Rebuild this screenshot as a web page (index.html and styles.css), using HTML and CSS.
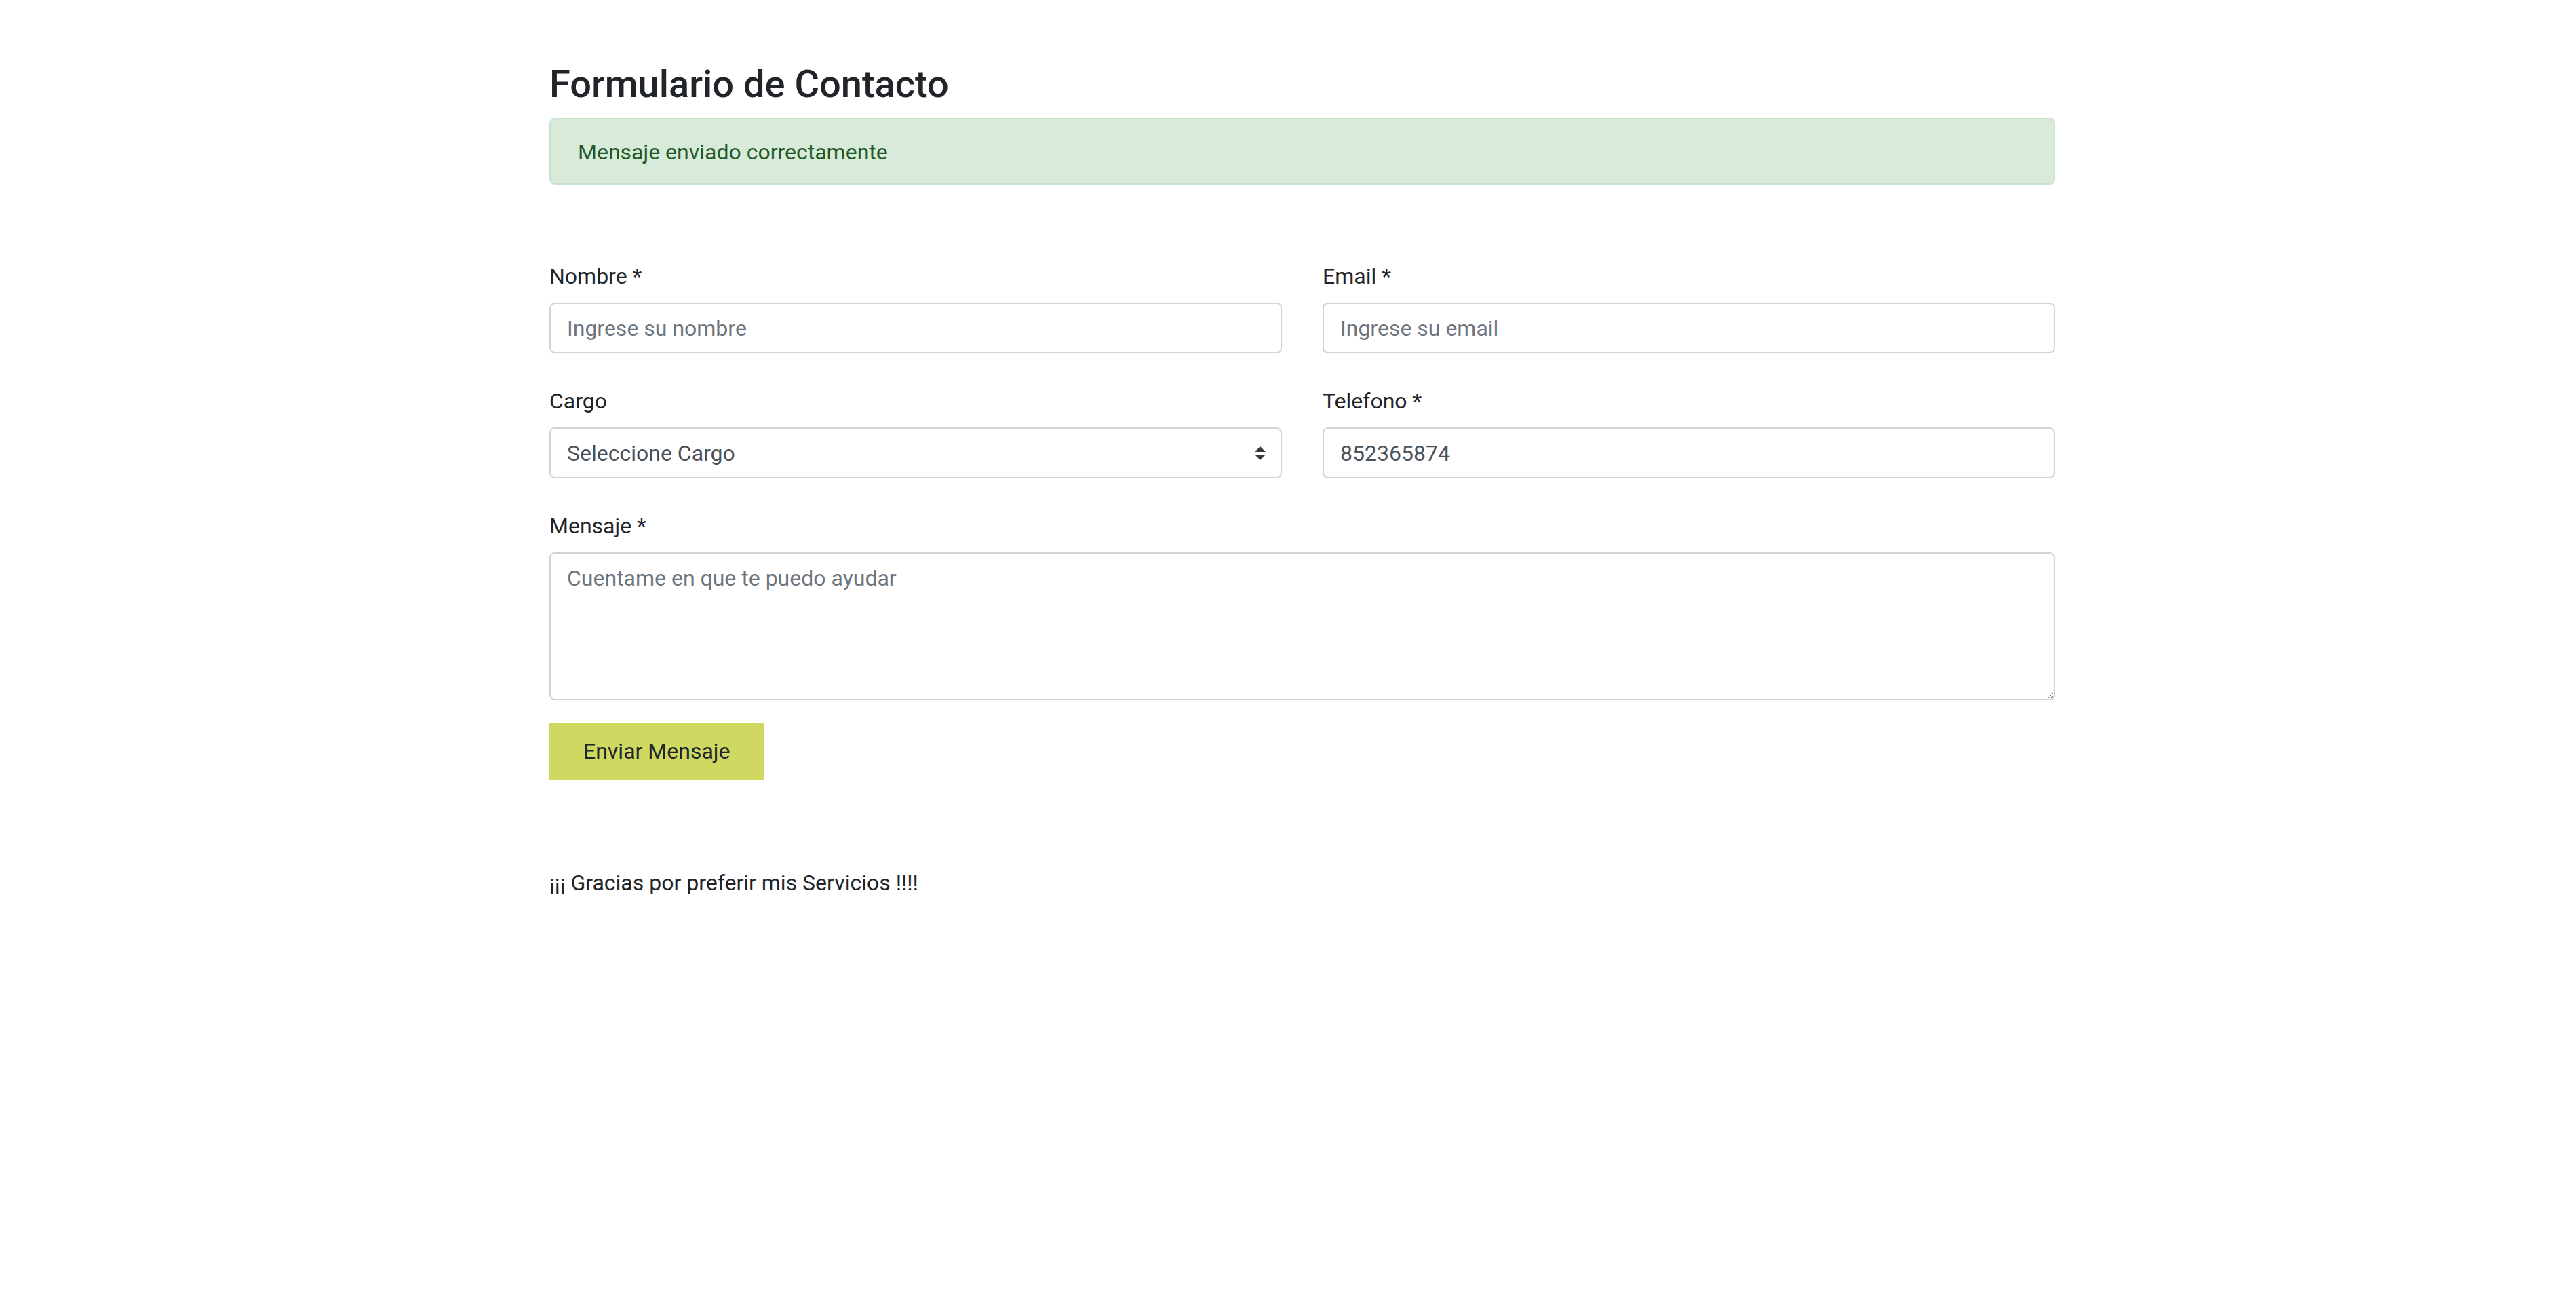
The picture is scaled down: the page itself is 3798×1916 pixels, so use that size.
FILE: index.html
```html
<!DOCTYPE html>
<html lang="es">
<head>
<meta charset="utf-8">
<title>Formulario de Contacto</title>
<link rel="stylesheet" href="styles.css">
</head>
<body>
<main class="container">
  <h3 class="title">Formulario de Contacto</h3>
  <div class="alert">Mensaje enviado correctamente</div>
  <form class="contact-form">
    <div class="row">
      <div class="field">
        <label class="label" for="nombre">Nombre *</label>
        <input class="control" id="nombre" type="text" placeholder="Ingrese su nombre">
      </div>
      <div class="field">
        <label class="label" for="email">Email *</label>
        <input class="control" id="email" type="email" placeholder="Ingrese su email">
      </div>
    </div>
    <div class="row">
      <div class="field">
        <label class="label" for="cargo">Cargo</label>
        <div class="select-wrap">
          <select class="control select" id="cargo">
            <option>Seleccione Cargo</option>
          </select>
          <svg class="select-arrow" viewBox="0 0 4 5" width="16" height="20"><path d="M2 0L0 2h4zm0 5L0 3h4z" fill="#343a40"/></svg>
        </div>
      </div>
      <div class="field">
        <label class="label" for="telefono">Telefono *</label>
        <input class="control" id="telefono" type="text" value="852365874">
      </div>
    </div>
    <div class="field field-msg">
      <label class="label" for="mensaje">Mensaje *</label>
      <textarea class="control textarea" id="mensaje" placeholder="Cuentame en que te puedo ayudar"></textarea>
    </div>
    <button class="btn" type="button">Enviar Mensaje</button>
  </form>
  <p class="thanks">¡¡¡ Gracias por preferir mis Servicios !!!!</p>
</main>
</body>
</html>
```
FILE: styles.css
```css
* { box-sizing: border-box; }
html, body { margin: 0; padding: 0; background: #fff; }
body {
  font-family: Roboto, "Noto Sans", "Liberation Sans", sans-serif;
  font-size: 32px;
  line-height: 48px;
  color: #212529;
}
.container {
  width: 2220px;
  margin-left: 810px;
  padding-top: 91px;
}
.title {
  margin: 0 0 16px;
  font-size: 56px;
  line-height: 1.2;
  font-weight: 500;
  color: #212529;
}
.alert {
  background: #d8ebdb;
  border: 2px solid #c6e4cb;
  border-radius: 8px;
  color: #245a27;
  padding: 24px 40px 22px;
  margin-bottom: 111px;
}
.row {
  display: grid;
  grid-template-columns: 1fr 1fr;
  column-gap: 60px;
  margin-bottom: 46px;
}
.field { display: flex; flex-direction: column; }
.field-msg { margin-bottom: 33px; }
.label {
  display: block;
  margin-bottom: 15px;
  line-height: 48px;
}
.control {
  display: block;
  width: 100%;
  height: 75px;
  padding: 12px 24px;
  font-family: inherit;
  font-size: 32px;
  line-height: 48px;
  color: #495057;
  background: #fff;
  border: 2px solid #ced4da;
  border-radius: 8px;
  outline: none;
  margin: 0;
}
.control::placeholder { color: #6c757d; opacity: 1; }
.select-wrap { position: relative; }
.select {
  appearance: none;
  -webkit-appearance: none;
  padding: 12px 56px 12px 24px;
}
.select-arrow {
  position: absolute;
  right: 24px;
  top: 50%;
  transform: translateY(-50%);
  pointer-events: none;
}
.textarea {
  height: 218px;
  resize: vertical;
}
.btn {
  display: block;
  margin: 0;
  padding: 18px 50px;
  border: 0;
  border-radius: 0;
  background: #cfd962;
  color: #212529;
  font-family: inherit;
  font-size: 32px;
  line-height: 48px;
  cursor: pointer;
}
.thanks {
  margin: 128px 0 0;
  line-height: 48px;
}
```
